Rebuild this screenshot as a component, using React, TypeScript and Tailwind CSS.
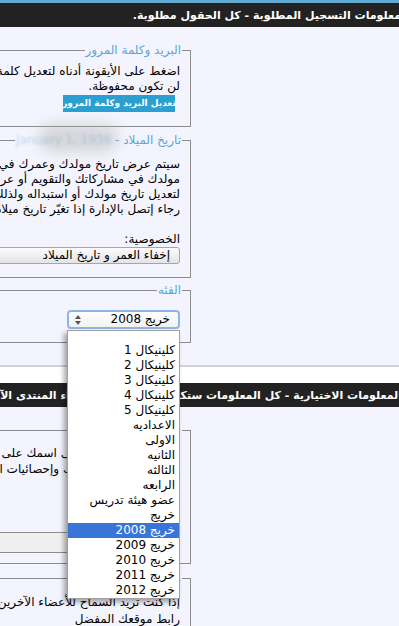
import type { ReactNode } from 'react';

const options = [
  'كلينيكال 1',
  'كلينيكال 2',
  'كلينيكال 3',
  'كلينيكال 4',
  'كلينيكال 5',
  'الاعداديه',
  'الاولى',
  'الثانيه',
  'الثالثه',
  'الرابعه',
  'عضو هيئة تدريس',
  'خريج',
  'خريج 2008',
  'خريج 2009',
  'خريج 2010',
  'خريج 2011',
  'خريج 2012',
];

function Fieldset({
  legend,
  className,
  children,
}: {
  legend?: ReactNode;
  className: string;
  children: ReactNode;
}) {
  return (
    <div className={`relative mr-[208px] w-[320px] border border-[#8c8c8c] pr-[10px] ${className}`}>
      {legend && (
        <span className="absolute -top-[8px] right-[8px] px-[1px] bg-[#f4f4fe] text-[#5aa6d6] leading-[15px] whitespace-nowrap">
          {legend}
        </span>
      )}
      {children}
    </div>
  );
}

function Line({ children }: { children: ReactNode }) {
  return <div className="whitespace-nowrap">{children}</div>;
}

function SortArrows() {
  return (
    <svg width="6" height="10" viewBox="0 0 6 10" className="text-[#555]">
      <path d="M3 0 L6 4 H0 Z M0 6 H6 L3 10 Z" fill="currentColor" />
    </svg>
  );
}

export default function App() {
  return (
    <div
      dir="rtl"
      className="relative w-[399px] h-[626px] overflow-hidden bg-[#f4f4fe] font-['DejaVu_Sans',sans-serif] text-[12px] leading-[15px] text-black"
    >
      <div className="h-[3px] bg-[#64a9cf]" />
      <div className="h-[24px] bg-[#222222] flex items-center overflow-hidden whitespace-nowrap text-white font-bold text-[11px]">
        <span className="-mr-[2px]">معلومات التسجيل المطلوبة - كل الحقول مطلوبة.</span>
      </div>

      {/* الحقول المطلوبة */}
      <div className="pt-[23px] pb-[22px]">
        <Fieldset legend="البريد وكلمة المرور" className="h-[77px] pt-[13px]">
          <Line>اضغط على الأيقونة أدناه لتعديل كلمة المرور أو البريد الإلكتروني، التعديلات</Line>
          <Line>لن تكون محفوظة.</Line>
          <div className="mt-[1px] mr-[5px] w-[112px] h-[17px] bg-[#2a9fd0] text-white font-bold text-[9px] flex items-center justify-center whitespace-nowrap">
            تعديل البريد وكلمة المرور
          </div>
        </Fieldset>

        <Fieldset
          legend={
            <>
              تاريخ الميلاد -{' '}
              <span dir="ltr" className="text-[#b9d9ee] blur-[1px]">January 1, 1936</span>
            </>
          }
          className="mt-[13px] h-[138px] pt-[16px]"
        >
          <Line>سيتم عرض تاريخ مولدك وعمرك في عدد من الأماكن مثل الملف الشخصي وبجوار</Line>
          <Line>مولدك في مشاركاتك والتقويم أو عرض عمرك فقط، لا يمكنك العودة مرة أخرى</Line>
          <Line>لتعديل تاريخ مولدك أو استبداله ولذلك تسجيل التاريخ الصحيح مهم جدا</Line>
          <Line>رجاء إتصل بالإدارة إذا تغيّر تاريخ ميلادك.</Line>
          <div className="mt-[15px]">الخصوصية:</div>
          <div className="w-[230px] h-[17px] rounded-[3px] border border-[#a6a6a6] bg-gradient-to-b from-[#fbfbfb] to-[#e4e4e4] flex items-center pr-[9px] whitespace-nowrap">
            إخفاء العمر و تاريخ الميلاد
          </div>
        </Fieldset>

        <Fieldset legend="الفئه" className="mt-[12px] h-[53px] pt-[19px]">
          <div className="w-[113px] h-[19px] rounded-[4px] border-2 border-[#8db6e8] bg-gradient-to-b from-white to-[#f2f2f2] flex items-center justify-between pr-[8px] pl-[6px] whitespace-nowrap">
            <span>خريج 2008</span>
            <SortArrows />
          </div>
        </Fieldset>
      </div>

      <div className="h-[2px] bg-[#d2d2d2]" />
      <div className="h-[16px] bg-white" />
      <div className="h-[24px] bg-[#222222] flex items-center overflow-hidden whitespace-nowrap text-white font-bold text-[11px]">
        <span className="-mr-[3px]">المعلومات الاختيارية - كل المعلومات ستكون مرئية لجميع أعضاء المنتدى الآخرين</span>
      </div>

      {/* الحقول الاختيارية */}
      <div className="pt-[23px]">
        <Fieldset legend="عنوان العضو" className="h-[134px] pt-[14px] leading-[16px]">
          <Line>هذا العنوان سيضاف إلى اسمك على المشاركات</Line>
          <Line>يظهر في ملفك وردودك وإحصائيات المنتدى</Line>
          <div className="mt-[55px] w-[230px] h-[21px] border-y border-[#8c8c8c] bg-[#efefef]" />
        </Fieldset>

        <Fieldset legend="موقعك" className="mt-[14px] h-[80px] pt-[15px] leading-[17px]">
          <Line>إذا كنت تريد السماح للأعضاء الآخرين لمعرفة موقعك الخاص</Line>
          <Line>رابط موقعك المفضل</Line>
        </Fieldset>
      </div>

      {/* تمويه التاريخ */}
      <div className="absolute left-[38px] top-[124px] w-[80px] h-[28px] rounded-full bg-[#a8a8a8] opacity-40 blur-[7px]" />

      {/* قائمة الفئه المفتوحة */}
      <div className="absolute left-[67px] top-[330px] w-[113px] border border-[#a0a0a0] bg-white shadow-[-3px_3px_5px_rgba(0,0,0,0.35)]">
        <div className="h-[12px]" />
        {options.map((o) => (
          <div
            key={o}
            className={`h-[15px] pr-[4px] leading-[15px] whitespace-nowrap ${
              o === 'خريج 2008' ? 'bg-[#3875d7] text-white' : ''
            }`}
          >
            {o}
          </div>
        ))}
      </div>
    </div>
  );
}
